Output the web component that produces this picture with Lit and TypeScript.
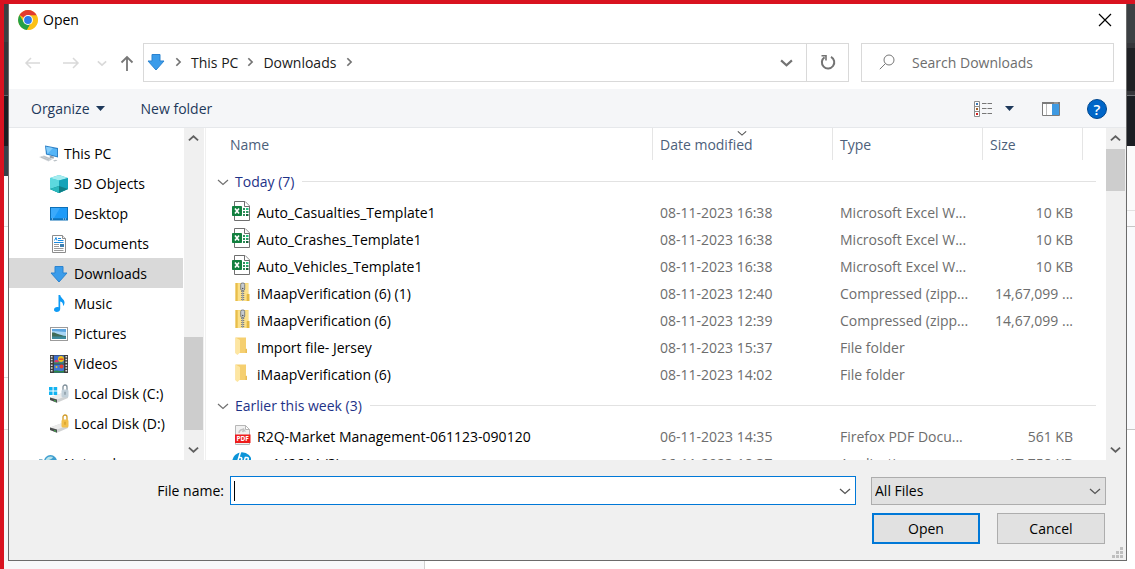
import { LitElement, html, svg, css, nothing } from "lit";
import { customElement, property } from "lit/decorators.js";
import { styleMap } from "lit/directives/style-map.js";

const icon = (body: unknown, size = 20) =>
  html`<svg class="icon" width=${size} height=${size} viewBox="0 0 20 20" aria-hidden="true">${body}</svg>`;

const downArrow = svg`<path d="M6 2.500h8v6.500h4L10 18 2 9h4z" fill="#3b9cea" stroke="#2b83d0" stroke-width="1"/>`;

const windowsDisk = (lock: string, shade: string, flag: boolean) => svg`
  <path d="M1 13.500 12 9.500 19 11.500 19 14 8 18.800 1 16z" fill="#d0d2d3"/>
  <path d="M1 13.500 12 9.500 19 11.500 8 15.500z" fill="#ececec"/>
  <path d="M1 13.500 8 15.500V18.800L1 16z" fill="#4a4d4d"/>
  <path d="M5 16.200l2 .6v.9l-2-.6z" fill="#3ecb4c"/>
  <path d="M14 7V3a2 2 0 0 1 4 0v4" fill="none" stroke=${shade} stroke-width="1.300"/>
  <rect x="12.500" y="5.500" width="7" height="8" rx="1.500" fill=${lock}/>
  <path d="M16 7.800v3" stroke=${shade} stroke-width="1.200"/>
  ${flag ? svg`<path d="M0 3h3.600v3.600H0zM4.600 3h3.600v3.600H4.600zM0 7.400h3.600V11H0zM4.600 7.400h3.600V11H4.600z" fill="#12b3f1"/>` : nothing}`;

const ICONS: Record<string, unknown> = {
  chrome: svg`
    <circle cx="10" cy="10" r="9.900" fill="#fbc116"/>
    <path d="M10 10 1.400 5A10 10 0 0 1 18.700 5.200z" fill="#e33b2e"/>
    <path d="M1.400 5A10 10 0 0 0 9 19.900l4.600-7.800L10 10 5.800 12.200z" fill="#22a147"/>
    <path d="M10 5.200h8.700a10 10 0 0 1-9.700 14.700l4.400-7.700z" fill="#fbc116"/>
    <circle cx="10" cy="10" r="4.900" fill="#fff"/><circle cx="10" cy="10" r="3.900" fill="#2c7be9"/>`,
  pc: svg`
    <path d="M6 1.500 19 4v9.500L7 10.500z" fill="#2d7fc4"/><path d="M7 2.700 18 4.900v7.300L8 9.700z" fill="#55b5f7"/>
    <path d="M7 2.700 14 4.100 8.500 9.700z" fill="#84cdfb"/>
    <path d="M11 11.500l4 1.300-.5 2-4-1z" fill="#9aa2aa"/>
    <path d="M0 13 5 11.500l9 3.500-4.500 2.500z" fill="#d0d5d9"/><path d="M2 13.100 10 16.100M4.500 12.400l7.500 2.900" stroke="#aab1b7" stroke-width=".7"/>
    <path d="M14 16.500l3-.8 1.500.8-3 1z" fill="#b9c0c5"/>`,
  cube: svg`
    <path d="M10 1 19 4v11l-9 4-9-4V4z" fill="#35c4cf"/><path d="M10 1 19 4l-9 2.500L1 4z" fill="#a5ecef"/>
    <path d="M1 4l9 2.500V19l-9-4z" fill="#5cd9df"/><path d="M10 6.500 19 4v11l-9 4z" fill="#15a3b8"/>
    <path d="M1 15l9-3 9 3-9 4z" fill="#0f7f86"/><path d="M1 15l9-3v7z" fill="#2bb9be"/>`,
  desktop: svg`
    <rect x="1.500" y="3.500" width="17" height="12.500" fill="#1e9bf8" stroke="#0d70b8"/>
    <path d="M2 4h9L5 14H2z" fill="#3caafb"/><path d="M2 14.500h16v1H2z" fill="#0b609f"/>
    <path d="M3 15h1M14 15h1M16 15h1" stroke="#fff" stroke-width=".8"/>`,
  document: svg`
    <path d="M3.500 1.500h10l3 3v14h-13z" fill="#fff" stroke="#8c8c8c"/><path d="M13.500 1.500v3h3" fill="#eee" stroke="#8c8c8c"/>
    <path d="M9 4.500h3M9 6.500h5.500M5 8.500h9.500" stroke="#1b8be0"/><path d="M5.500 6.500l1.500-3 1 3" stroke="#1b8be0" fill="none"/>
    <path d="M5 10.500h5M5 12.500h5M5 14.500h9.500M5 16.500h9.500" stroke="#9b9b9b"/><rect x="11" y="10" width="4" height="3" fill="#3e7fb0"/>`,
  download: downArrow,
  music: svg`
    <path d="M9.500 1h1.700c.4 3.200 4.300 4 4.300 7.500 0 1.800-.8 2.800-1.500 3.500.4-2.500-.6-4-2.800-4.600v7.600c0 1.900-1.700 3-3.500 3-1.600 0-2.700-.9-2.700-2.200 0-1.600 1.500-2.700 3.200-2.700.5 0 .9.100 1.300.2z" fill="#0f9bf5"/>`,
  picture: svg`
    <rect x="1.500" y="3.500" width="17" height="13" fill="#fff" stroke="#9b9b9b"/><rect x="3" y="5" width="14" height="10" fill="#a9d6f5"/>
    <path d="M3 5h14v3L3 7z" fill="#5ba4df"/><path d="M3 8.500c4-.5 6 2.500 14 3.500v1H3z" fill="#3e6b58"/><path d="M3 12.500h14V15H3z" fill="#3b8a9d"/>`,
  video: svg`
    <rect x="1" y="1" width="18" height="18" fill="#3b3b3b"/><rect x="5" y="1.500" width="10" height="8" fill="#3c6fd0"/><rect x="5" y="10.500" width="10" height="8" fill="#3f77d6"/>
    <path d="M2.700 2v16M17.300 2v16" stroke="#ddd" stroke-width="1.700" stroke-dasharray="1.500 1.300"/>
    <circle cx="12" cy="5" r="3" fill="#f0c419"/><path d="M10 4.500h4.500v1.300H10z" fill="#d93b2c"/><ellipse cx="7.500" cy="7.300" rx="2" ry="1.500" fill="#e23d6c"/><path d="M5 8.500h10v1H5z" fill="#3c9a3c"/>
    <circle cx="12.500" cy="12.500" r="2" fill="#e8402e"/><path d="M5 17c3-1.500 5 1 10-.5v2H5z" fill="#2e8746"/><circle cx="7.500" cy="13" r="1" fill="#f0c419"/>`,
  diskC: windowsDisk("#c2d0d9", "#7f8f99", true),
  diskD: windowsDisk("#f2c04c", "#d09a26", false),
  network: svg`
    <circle cx="11.500" cy="7.500" r="6.500" fill="#3f9fd0"/><path d="M7 5c2-3 5-3 7-2-1 3-4 2-5 4-1 1-3 0-2-2z" fill="#b9e3ea"/>
    <path d="M0 5h3l2 2v5L0 10z" fill="#8bb6c9"/>`,
  excel: svg`
    <path d="M3.500 .500h10.500l4.500 4.500v14.500h-15z" fill="#fff" stroke="#6f6f6f"/><path d="M13.500 .500v5h5" fill="#fff" stroke="#6f6f6f"/>
    <path d="M12 8h2M12 11h2M12 14h2" stroke="#2f8f5b" stroke-width="2"/><path d="M15 8h2.500" stroke="#21c17c" stroke-width="2"/><path d="M15 11h2.500" stroke="#2e9a63" stroke-width="2"/><path d="M15 14h2.500" stroke="#17633a" stroke-width="2"/>
    <rect x="1" y="5" width="10" height="10" rx=".8" fill="#12803f"/><path d="M4 7.500l4 5M8 7.500l-4 5" stroke="#fff" stroke-width="1.600"/>`,
  zip: svg`
    <path d="M4.500 1h13v18h-13z" fill="#f7d56b"/><path d="M4.500 1h2v18h-2z" fill="#e7bd4c"/><path d="M15.500 12h3v7h-3z" fill="#e5b940"/><path d="M7 1.500h10v10l-1.500 1V19H7z" fill="#fbe08a"/>
    <path d="M11.700 1v18" stroke="#70757a" stroke-width="3" stroke-dasharray="1 1"/><path d="M11.700 1v18" stroke="#a7acb0" stroke-width="1"/>
    <rect x="9.700" y="1" width="4" height="7.500" rx="1.500" fill="#c6cbd0" stroke="#6b7075" stroke-width=".8"/><circle cx="11.700" cy="6.500" r=".8" fill="#555"/>`,
  folder: svg`
    <path d="M4.500 1.500h10.500v11l1 .5v4h-11.500z" fill="#f5cf70"/><path d="M14.500 13h1.500v4h-1.500z" fill="#e9bd58"/><path d="M4.500 1.500 9 4v12.500L6.500 19l-2-1.500z" fill="#fde6a2"/>`,
  pdf: svg`
    <path d="M4.500 .5h10l4 4v15h-14z" fill="#f1f1f1" stroke="#b7b7b7"/><path d="M14.500 .5v4h4z" fill="#fff" stroke="#b7b7b7"/><path d="M8 8c0-3 3-4 5-3l-1-1.500M13 5l-1.500 2" fill="none" stroke="#c2c2c2" stroke-width="1.500"/>
    <rect x="4" y="9.500" width="15.500" height="8.500" fill="#ee1c1c"/>
    <text x="11.700" y="16" font-size="6.500" font-weight="700" font-family="Open Sans, sans-serif" text-anchor="middle" fill="#fff">PDF</text>`,
  hp: svg`
    <circle cx="11" cy="10" r="9.800" fill="#0c94d8"/><path d="M9.500 0 5 15M8.500 5.500h1c1.500 0 1.500 1 1 2.500l-1.500 5M14.500 5l-4.500 14M14 5.500h2c1.500 0 1.500 1 1 2.500l-1 3c-.3 1-1 1.500-2 1.500h-1" fill="none" stroke="#fff" stroke-width="1.500"/>`,
};

const chevron = (dir: "up" | "down" | "right", size: number, width: number) => {
  const d = { up: "M1 8 6 3.500 11 8", down: "M1 4 6 8.500 11 4", right: "M4 1.500 8.500 6 4 10.500" }[dir];
  return html`<svg class="chev" width=${size} height=${size} viewBox="0 0 12 12" aria-hidden="true"><path d=${d} fill="none" stroke="currentColor" stroke-width=${width}/></svg>`;
};
const caretDown = html`<svg class="tri" width="9" height="5" viewBox="0 0 9 5" aria-hidden="true"><path d="M0 0h9L4.500 5z" fill="currentColor"/></svg>`;

interface FileRow { icon: string; name: string; date: string; type: string; size?: string }

const GROUPS: { title: string; rows: FileRow[] }[] = [
  {
    title: "Today (7)",
    rows: [
      { icon: "excel", name: "Auto_Casualties_Template1", date: "08-11-2023 16:38", type: "Microsoft Excel W...", size: "10 KB" },
      { icon: "excel", name: "Auto_Crashes_Template1", date: "08-11-2023 16:38", type: "Microsoft Excel W...", size: "10 KB" },
      { icon: "excel", name: "Auto_Vehicles_Template1", date: "08-11-2023 16:38", type: "Microsoft Excel W...", size: "10 KB" },
      { icon: "zip", name: "iMaapVerification (6) (1)", date: "08-11-2023 12:40", type: "Compressed (zipp...", size: "14,67,099 ..." },
      { icon: "zip", name: "iMaapVerification (6)", date: "08-11-2023 12:39", type: "Compressed (zipp...", size: "14,67,099 ..." },
      { icon: "folder", name: "Import file- Jersey", date: "08-11-2023 15:37", type: "File folder" },
      { icon: "folder", name: "iMaapVerification (6)", date: "08-11-2023 14:02", type: "File folder" },
    ],
  },
  {
    title: "Earlier this week (3)",
    rows: [
      { icon: "pdf", name: "R2Q-Market Management-061123-090120", date: "06-11-2023 14:35", type: "Firefox PDF Docu...", size: "561 KB" },
      { icon: "hp", name: "sp142614 (3)", date: "06-11-2023 18:37", type: "Application", size: "17,758 KB" },
    ],
  },
];

const PLACES = [
  { icon: "cube", label: "3D Objects" },
  { icon: "desktop", label: "Desktop" },
  { icon: "document", label: "Documents" },
  { icon: "download", label: "Downloads", current: true },
  { icon: "music", label: "Music" },
  { icon: "picture", label: "Pictures" },
  { icon: "video", label: "Videos" },
  { icon: "diskC", label: "Local Disk (C:)" },
  { icon: "diskD", label: "Local Disk (D:)" },
];

const shared = css`
  * { box-sizing: border-box; }
  button, input, select { font: inherit; color: inherit; margin: 0; padding: 0; border: 0; background: none; border-radius: 0; }
  button { text-align: left; white-space: nowrap; }
  svg { display: block; flex: none; }
`;

@customElement("scroll-bar")
export class ScrollBar extends LitElement {
  @property({ type: Number }) before = 0;
  @property({ type: Number }) thumb = 50;
  @property({ type: Number }) after = 50;

  static styles = [shared, css`
    :host { display: flex; flex-direction: column; width: 20px; flex: none; background: #f0f0f0; color: #606060; }
    .step { height: 21px; flex: none; display: flex; align-items: center; justify-content: center; padding-right: 1px; }
    .thumb { background: #cdcdcd; margin-right: 1px; }
  `];

  render() {
    const part = (n: number) => styleMap({ flex: `${n} 0 0` });
    return html`
      <button class="step" aria-label="Scroll up">${chevron("up", 11, 2)}</button>
      <div style=${part(this.before)}></div>
      <div class="thumb" style=${part(this.thumb)}></div>
      <div style=${part(this.after)}></div>
      <button class="step" aria-label="Scroll down">${chevron("down", 11, 2)}</button>`;
  }
}

@customElement("places-tree")
export class PlacesTree extends LitElement {
  static styles = [shared, css`
    :host { display: flex; width: 197px; flex: none; border-right: 1px solid #f0f0f0; padding-right: 1px; overflow: hidden; }
    .tree { flex: 1; min-width: 0; padding-top: 10px; overflow: hidden; }
    .item { display: flex; align-items: center; gap: 5px; height: 30px; padding: 2px 0 0 40px; margin-right: 1px; color: #000; text-decoration: none; white-space: nowrap; }
    .root { padding-left: 30px; }
    .network { margin-top: 10px; }
    .current { background: #d9d9d9; }
  `];

  render() {
    return html`
      <nav class="tree" aria-label="Places">
        <a class="item root" href="#pc">${icon(ICONS.pc)}This PC</a>
        ${PLACES.map(p => html`<a class="item ${p.current ? "current" : ""}" href="#place">${icon(ICONS[p.icon])}${p.label}</a>`)}
        <a class="item root network" href="#network">${icon(ICONS.network)}Network</a>
      </nav>
      <scroll-bar .before=${188} .thumb=${93} .after=${9}></scroll-bar>`;
  }
}

@customElement("file-list")
export class FileList extends LitElement {
  static styles = [shared, css`
    :host { display: flex; flex: 1; min-width: 0; overflow: hidden; }
    .view { flex: 1; min-width: 0; overflow: hidden; }
    table { width: 100%; table-layout: fixed; border-collapse: separate; border-spacing: 0; }
    .w-date { width: 180px; } .w-type { width: 150px; } .w-size { width: 100px; } .w-rest { width: 24px; }
    th { height: 32px; padding: 2px 0 0 7px; border-left: 1px solid #e5e5e5; font-weight: 400; text-align: left; color: #4c607a; }
    td { height: 27px; padding: 0 0 0 7px; border-left: 1px solid transparent; color: #6d6d6d; white-space: nowrap; overflow: hidden; }
    th.name { border-left: 0; padding-left: 24px; }
    td.name { border-left: 0; padding-left: 25px; color: #000; }
    th.date { padding-top: 0; }
    .sorted { display: grid; justify-items: center; align-items: center; padding-right: 8px; height: 32px; }
    .sorted > * { grid-area: 1 / 1; }
    .sorted .label { justify-self: start; padding-top: 2px; }
    .sorted .chev { align-self: start; color: #555; }
    .cell { display: flex; align-items: center; gap: 6px; }
    .cell .icon { margin-bottom: 3px; }
    td.size { text-align: right; padding: 0 9px 0 0; }
    td.group { height: 35px; border-left: 0; padding: 0 10px 0 11px; color: #1e3287; }
    .first td.group { height: 39px; padding-top: 4px; }
    .heading { display: flex; align-items: center; gap: 6px; }
    .heading .chev { color: #707070; }
    .rule { flex: 1; height: 1px; margin-left: 2px; background: #e2e2e2; }
  `];

  render() {
    return html`
      <div class="view">
        <table>
          <colgroup><col><col class="w-date"><col class="w-type"><col class="w-size"><col class="w-rest"></colgroup>
          <thead><tr>
            <th class="name">Name</th>
            <th class="date"><div class="sorted"><span class="label">Date modified</span>${chevron("down", 10, 1.3)}</div></th>
            <th>Type</th><th>Size</th><th></th>
          </tr></thead>
          ${GROUPS.map((g, i) => html`
            <tbody class=${i === 0 ? "first" : ""}>
              <tr><td class="group" colspan="5"><div class="heading">${chevron("down", 12, 1.2)}<span>${g.title}</span><span class="rule"></span></div></td></tr>
              ${g.rows.map(r => html`<tr>
                <td class="name"><div class="cell">${icon(ICONS[r.icon])}<span>${r.name}</span></div></td>
                <td>${r.date}</td><td>${r.type}</td><td class="size">${r.size ?? nothing}</td><td></td>
              </tr>`)}
            </tbody>`)}
        </table>
      </div>
      <scroll-bar .before=${0} .thumb=${42} .after=${248}></scroll-bar>`;
  }
}

@customElement("app-root")
export class AppRoot extends LitElement {
  static styles = [shared, css`
    :host { display: grid; box-sizing: border-box; height: 100vh; grid-template: minmax(0, 1fr) 8px / 4px minmax(0, 1fr) 8px;
      border: solid #d91220; border-width: 4px 0 0 4px; font: 14px/20px "Open Sans", sans-serif; color: #000; overflow: hidden; background: #fff; }
    .edge-left { background: linear-gradient(#3c4043 38px, #35363a 38px 91px, #5f6368 91px 92px, #1c1d21 92px 142px, #37414a 142px 172px,
      #fbfbfc 172px 222px, #dcdcdc 222px 223px, #fff 223px 373px, #dcdcdc 373px 374px, #fff 374px 425px, #dcdcdc 425px 426px, #fbfbfc 426px 516px, #f6f7f9 516px); }
    .edge-right { background: linear-gradient(#3c4043 39px, #35363a 39px 44px, #202125 44px 87px, #35363a 87px 91px, #6f7276 91px 92px, #1b1e23 92px 142px,
      #fbfbfb 142px 206px, #e2e2e2 206px 207px, #fbfbfc 207px 222px, #c6c6c6 222px 223px, #f9fafc 223px 425px, #c6c6c6 425px 426px, #fff 426px); }
    .edge-bottom { grid-column: 1 / -1; display: flex; }
    .panel { width: 421px; background: #f7f8fa; border-right: 1px solid #d0d0d0; }
    .dialog { position: relative; display: flex; flex-direction: column; min-height: 0; background: #fff; border: solid #6b6b6b; border-width: 0 1px 1px; }
    .icon-btn { display: flex; align-items: center; justify-content: center; flex: none; }

    .title { display: flex; align-items: center; gap: 5px; height: 31px; flex: none; padding: 0 14px 0 9px; }
    .title h1 { flex: 1; margin: 0; font: inherit; }

    .nav { display: flex; align-items: center; height: 54px; flex: none; padding: 0 12px 0 14px; }
    .history { display: flex; align-items: center; gap: 18px; color: #d9d9d9; margin-right: 9px; padding-top: 2px; }
    .history .up { color: #777; }
    .history .recent { margin: 0 -5px 0 -2px; }
    .address { flex: 1; min-width: 0; display: flex; align-items: center; height: 39px; border: 1px solid #d9d9d9; padding-left: 2px; color: #1a1a1a; }
    .crumb { display: flex; align-items: center; gap: 8px; padding-left: 7px; }
    .crumb button { padding-top: 1px; }
    .crumb .chev, .address > .icon-btn { color: #737373; }
    .tail { flex: 1; padding-left: 8px; color: #737373; }
    .drop { width: 40px; height: 100%; }
    .refresh { width: 42px; height: 100%; border-left: 1px solid #d9d9d9; }
    .search { display: flex; align-items: center; gap: 17px; width: 253px; height: 39px; margin-left: 12px; padding: 0 8px 0 17px; border: 1px solid #d9d9d9; color: #6d6d6d; }
    .search input { flex: 1; min-width: 0; outline: 0; padding-top: 1px; }
    .search input::placeholder { color: #6d6d6d; opacity: 1; }

    .tools { display: flex; align-items: center; height: 39px; flex: none; padding: 1px 19px 0 22px; background: #f5f6f8; border-bottom: 1px solid #e6e8eb; color: #1e395b; }
    .organize { display: flex; align-items: center; gap: 6px; margin-right: 36px; }
    .right { margin-left: auto; display: flex; align-items: center; }
    .views { display: flex; align-items: center; gap: 12px; margin-right: 28px; }
    .help { margin-left: 27px; width: 20px; height: 20px; border-radius: 50%; background: #0066c8; border: 1px solid #00478f; color: #fff; font: 600 15px/18px "Open Sans", sans-serif; text-align: center; }

    .body { flex: 1; min-height: 0; display: flex; }
    .foot { flex: none; background: #f0f0f0; padding: 16px 20px 16px 0; color: #000; }
    .line { display: flex; align-items: center; gap: 15px; }
    .name-label { width: 215px; flex: none; text-align: right; margin-right: -9px; }
    .combo { flex: 1; display: flex; align-items: center; height: 29px; min-width: 0; background: #fff; border: 1px solid #0078d7; padding: 0 4px 0 3px; }
    .combo::before { content: ""; width: 1px; height: 20px; background: #000; }
    .combo input { flex: 1; min-width: 0; height: 100%; padding-left: 2px; outline: 0; }
    .combo .chev, .filter .chev { color: #555; }
    .filter { width: 235px; flex: none; display: grid; align-items: center; }
    .filter > * { grid-area: 1 / 1; }
    .filter select { height: 28px; width: 100%; padding-left: 3px; appearance: none; background: #e1e1e1; border: 1px solid #adadad; }
    .filter .chev { justify-self: end; margin-right: 5px; pointer-events: none; }
    .actions { display: flex; justify-content: flex-end; gap: 17px; margin: 8px 1px 0 0; }
    .actions button { width: 108px; height: 31px; background: #e1e1e1; border: 1px solid #adadad; text-align: center; }
    .actions .primary { border: 2px solid #0078d7; }
    .grip { position: absolute; right: 3px; bottom: 2px; }
  `];

  render() {
    return html`
      <div class="edge-left"></div>
      <section class="dialog" role="dialog" aria-label="Open">
        <header class="title">
          ${icon(ICONS.chrome)}<h1>Open</h1>
          <button class="icon-btn" aria-label="Close"><svg width="14" height="14" viewBox="0 0 14 14"><path d="M1 1 13 13M13 1 1 13" stroke="#000" stroke-width="1.200"/></svg></button>
        </header>
        <div class="nav">
          <div class="history">
            <button class="icon-btn" aria-label="Back"><svg width="20" height="14" viewBox="0 0 20 14"><path d="M17 7H3M8 2 3 7l5 5" fill="none" stroke="currentColor" stroke-width="1.500"/></svg></button>
            <button class="icon-btn" aria-label="Forward"><svg width="20" height="14" viewBox="0 0 20 14"><path d="M2 7h15M12 2l5 5-5 5" fill="none" stroke="currentColor" stroke-width="1.500"/></svg></button>
            <button class="icon-btn recent" aria-label="Recent locations">${chevron("down", 10, 2)}</button>
            <button class="icon-btn up" aria-label="Up"><svg width="14" height="18" viewBox="0 0 14 18"><path d="M7 17V3M1.500 8.500 7 3l5.500 5.500" fill="none" stroke="currentColor" stroke-width="1.800"/></svg></button>
          </div>
          <div class="address">
            ${icon(ICONS.download)}
            <div class="crumb">${chevron("right", 10, 2)}<button>This PC</button></div>
            <div class="crumb">${chevron("right", 10, 2)}<button>Downloads</button></div>
            <div class="tail">${chevron("right", 10, 2)}</div>
            <button class="icon-btn drop" aria-label="Previous locations">${chevron("down", 13, 2)}</button>
            <button class="icon-btn refresh" aria-label="Refresh"><svg width="16" height="16" viewBox="0 0 16 16"><path d="M11 2.800A6.200 6.200 0 1 1 4.500 3.200" fill="none" stroke="currentColor" stroke-width="2"/><path d="M1.500 1.800H6v4.700" fill="none" stroke="currentColor" stroke-width="1.600"/></svg></button>
          </div>
          <label class="search">
            <svg width="16" height="16" viewBox="0 0 16 16" aria-hidden="true"><circle cx="10" cy="6" r="5" fill="none" stroke="#777"/><path d="M6.500 9.500.8 15.200" stroke="#777"/></svg>
            <input type="text" placeholder="Search Downloads" aria-label="Search Downloads">
          </label>
        </div>
        <div class="tools">
          <button class="organize">Organize ${caretDown}</button>
          <button>New folder</button>
          <div class="right">
            <button class="views" aria-label="Change your view">
              <svg width="19" height="16" viewBox="0 0 19 16"><path d="M.500 .500h5v15h-5zM.500 5.500h5M.500 10.500h5" fill="#fff" stroke="#8c8c8c"/><path d="M2 2h2v2H2z" fill="#3a77b5"/><path d="M2 7h2v2H2z" fill="#a0622d"/><path d="M2 12h2v2H2z" fill="#d02020"/><path d="M8 2.500h4.500M13.500 2.500H18M8 7.500h4.500M13.500 7.500H18M8 12.500h4.500M13.500 12.500H18" stroke="#777"/></svg>
              ${caretDown}
            </button>
            <button class="icon-btn" aria-label="Preview pane"><svg width="18" height="14" viewBox="0 0 18 14"><path d="M.500 .500h17v13H.500z" fill="#fff" stroke="#7b7b7b"/><path d="M0 0h18v2H0z" fill="#7b7b7b"/><path d="M4.500 2v11" stroke="#bbb"/><path d="M10 2h7v11h-7z" fill="#3f9ae2"/><path d="M12.500 1h1M14.500 1h1" stroke="#fff" stroke-width=".8"/></svg></button>
            <button class="help" aria-label="Help">?</button>
          </div>
        </div>
        <div class="body"><places-tree></places-tree><file-list></file-list></div>
        <footer class="foot">
          <div class="line">
            <label class="name-label" for="filename">File name:</label>
            <div class="combo"><input id="filename" type="text">${chevron("down", 12, 1.3)}</div>
            <div class="filter"><select aria-label="File type"><option>All Files</option></select>${chevron("down", 12, 1.3)}</div>
          </div>
          <div class="actions"><button class="primary">Open</button><button>Cancel</button></div>
        </footer>
        <svg class="grip" width="11" height="11" viewBox="0 0 11 11" aria-hidden="true"><path d="M8 0h3v3H8zM4 4h3v3H4zM8 4h3v3H8zM0 8h3v3H0zM4 8h3v3H4zM8 8h3v3H8z" fill="#bfbfbf"/></svg>
      </section>
      <div class="edge-right"></div>
      <div class="edge-bottom"><div class="panel"></div></div>`;
  }
}
